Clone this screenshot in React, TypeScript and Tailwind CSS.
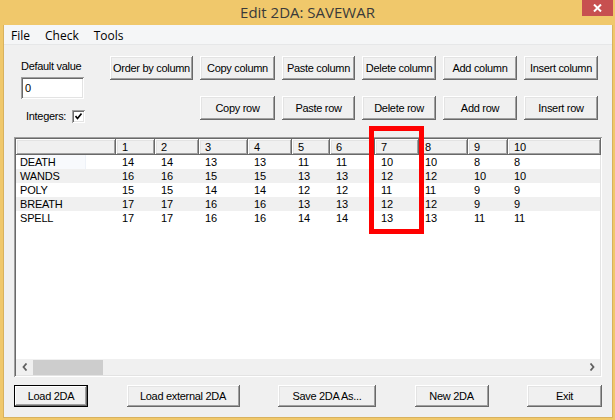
import React from 'react';

const RAISED =
  'shadow-[inset_-1px_-1px_#696969,inset_1px_1px_#ffffff,inset_-2px_-2px_#a0a0a0,inset_2px_2px_#e3e3e3]';
const DEFAULT_BTN =
  'shadow-[inset_0_0_0_1px_#000000,inset_-2px_-2px_#696969,inset_2px_2px_#ffffff,inset_-3px_-3px_#a0a0a0]';
const SUNKEN =
  'shadow-[inset_1px_1px_#a0a0a0,inset_-1px_-1px_#ffffff,inset_2px_2px_#696969,inset_-2px_-2px_#e3e3e3]';
const COLS = 'grid grid-cols-[100px_39px_44px_49px_44px_38px_45px_44px_49px_40px_93px]';

const HEADERS = ['', '1', '2', '3', '4', '5', '6', '7', '8', '9', '10'];

const ROWS: [string, number[]][] = [
  ['DEATH', [14, 14, 13, 13, 11, 11, 10, 10, 8, 8]],
  ['WANDS', [16, 16, 15, 15, 13, 13, 12, 12, 10, 10]],
  ['POLY', [15, 15, 14, 14, 12, 12, 11, 11, 9, 9]],
  ['BREATH', [17, 17, 16, 16, 13, 13, 12, 12, 9, 9]],
  ['SPELL', [17, 17, 16, 16, 14, 14, 13, 13, 11, 11]],
];

function Btn({ label, primary = false, className = '' }: { label: string; primary?: boolean; className?: string }) {
  return (
    <button
      className={`flex items-center justify-center whitespace-nowrap bg-[#f0f0f0] text-[11px] leading-none tracking-[-0.3px] text-black ${
        primary ? DEFAULT_BTN : RAISED
      } ${className}`}
    >
      {label}
    </button>
  );
}

function Chevron({ dir }: { dir: 'left' | 'right' }) {
  return (
    <svg width="6" height="8" viewBox="0 0 6 8">
      <path
        d={dir === 'left' ? 'M4.5 0.5 L1.5 4 L4.5 7.5' : 'M1.5 0.5 L4.5 4 L1.5 7.5'}
        fill="none"
        stroke="#606060"
        strokeWidth="1.8"
      />
    </svg>
  );
}

function DataGrid() {
  return (
    <div className={`mx-[10px] mt-[14px] h-[240px] bg-white p-[2px] ${SUNKEN}`}>
      <div className="flex h-full flex-col text-[11px] tracking-[-0.2px]">
        <div className={COLS}>
          {HEADERS.map((h, i) => (
            <div key={i} className={`h-[16px] bg-[#f0f0f0] pl-[6px] pt-[1px] leading-[14px] ${RAISED}`}>
              {h}
            </div>
          ))}
        </div>
        {ROWS.map(([name, vals], r) => (
          <div key={name} className={`${COLS} ${r % 2 === 1 ? 'bg-[#f0f0f0]' : 'bg-white'}`}>
            <div className="h-[14px] pl-[4px] leading-[14px]">
              {r === 0 ? (
                <span className="block w-[66px] bg-[#f8fafd] shadow-[inset_-1px_0_#eef2f8]">{name}</span>
              ) : (
                name
              )}
            </div>
            {vals.map((v, c) => (
              <div key={c} className="h-[14px] pl-[6px] leading-[14px]">
                {v}
              </div>
            ))}
          </div>
        ))}
        <div className="flex-1 bg-white" />
        {/* horizontal scroll bar */}
        <div className="flex h-[16px] items-stretch bg-[#f0f0f0]">
          <div className="flex w-[17px] items-center justify-center">
            <Chevron dir="left" />
          </div>
          <div className="mt-[1px] w-[70px] bg-[#cdcdcd]" />
          <div className="flex-1" />
          <div className="flex w-[17px] items-center justify-center">
            <Chevron dir="right" />
          </div>
        </div>
      </div>
    </div>
  );
}

export default function App() {
  return (
    <div className="relative flex h-[420px] w-[615px] flex-col bg-[#f0c86b] font-['Liberation_Sans',Arial,sans-serif] text-black">
      {/* title bar */}
      <div className="flex h-[25px] px-[2px]">
        <div className="w-[31px]" />
        <div className="flex flex-1 items-center justify-center font-['Open_Sans',sans-serif] text-[15px] text-[#3a3a3a]">
          Edit 2DA: SAVEWAR
        </div>
        <div className="flex h-[16px] w-[31px] items-center justify-center bg-[#c75050]">
          <svg width="9" height="8" viewBox="0 0 9 8">
            <path d="M1 0.5 L8 7.5 M8 0.5 L1 7.5" stroke="#ffffff" strokeWidth="2" />
          </svg>
        </div>
      </div>

      <div className="mb-[2px] ml-[3px] mr-[2px] flex flex-1 flex-col border border-t-0 border-[#d9b25d] bg-[#f0f0f0]">
        {/* menu */}
        <div className="flex h-[20px] items-center gap-[15px] border-b border-[#e6e7e8] bg-[#f5f6f7] pl-[7px] pt-[2px] font-['Open_Sans',sans-serif] text-[12px]">
          <span>File</span>
          <span>Check</span>
          <span>Tools</span>
        </div>

        {/* options and column / row commands */}
        <div className="flex pl-[17px] pt-[11px] text-[11px] tracking-[-0.3px]">
          <div className="flex w-[64px] flex-col">
            <div className="mt-[4px] whitespace-nowrap leading-[13px]">Default value</div>
            <div className={`mt-[4px] h-[22px] w-[63px] bg-white pl-[4px] leading-[22px] ${SUNKEN}`}>0</div>
            <div className="mt-[10px] flex h-[14px] items-center gap-[6px] whitespace-nowrap pl-[5px]">
              <span>Integers:</span>
              <div className={`flex h-[13px] w-[13px] items-center justify-center bg-white ${SUNKEN}`}>
                <svg width="7" height="7" viewBox="0 0 7 7">
                  <path d="M0.5 3 L2.5 5.5 L6.5 0.5" fill="none" stroke="#000" strokeWidth="1.6" />
                </svg>
              </div>
            </div>
          </div>
          <div className="ml-[25px] grid grid-cols-[83px_75px_73px_74px_74px_74px] grid-rows-[24px_24px] gap-x-[7px] gap-y-[16px]">
            <Btn label="Order by column" />
            <Btn label="Copy column" />
            <Btn label="Paste column" />
            <Btn label="Delete column" />
            <Btn label="Add column" />
            <Btn label="Insert column" />
            <Btn label="Copy row" className="col-start-2" />
            <Btn label="Paste row" />
            <Btn label="Delete row" />
            <Btn label="Add row" />
            <Btn label="Insert row" />
          </div>
        </div>

        <DataGrid />

        {/* file commands */}
        <div className="mt-[8px] flex h-[22px] justify-between px-[10px]">
          <Btn label="Load 2DA" primary className="w-[74px]" />
          <Btn label="Load external 2DA" className="w-[113px]" />
          <Btn label="Save 2DA As..." className="w-[98px]" />
          <Btn label="New 2DA" className="w-[74px]" />
          <Btn label="Exit" className="w-[75px]" />
        </div>
      </div>

      {/* highlight around column 7 */}
      <div className="pointer-events-none absolute left-[369px] top-[126px] h-[108px] w-[55px] border-[5px] border-[#ff0000]" />
    </div>
  );
}
